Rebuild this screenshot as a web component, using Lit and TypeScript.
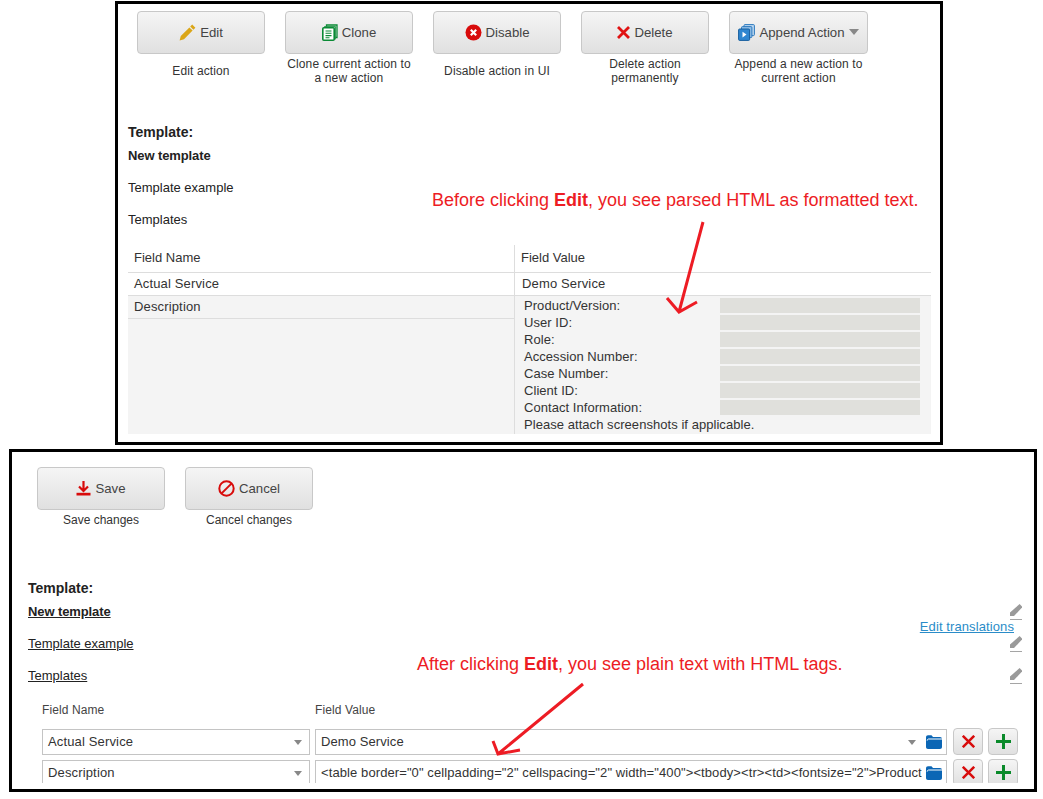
import { LitElement, html, css, svg } from "lit";
import { customElement } from "lit/decorators.js";

const icons: Record<string, any> = {
  edit: html`<svg width="17" height="17" viewBox="0 0 17 17"><path d="M13.2 .6l3.2 3.2-2 2-3.2-3.2zM10.4 3.4l3.2 3.2-8.6 8.6-4.4 1.2 1.2-4.4z" fill="#dba617"/></svg>`,
  clone: html`<svg width="16" height="17" viewBox="0 0 16 17"><path d="M4.5 2.5V1h10.5v12.5h-1.5" fill="none" stroke="#0a8a35" stroke-width="1.3"/><rect x="2.7" y="2.7" width="10.6" height="12.2" fill="none" stroke="#0a8a35" stroke-width="1"/><rect x=".8" y="3.8" width="11.4" height="12.4" rx="1" fill="#fff" stroke="#0a8a35" stroke-width="1.6"/><path d="M3.5 7h6M3.5 9.3h6M3.5 11.6h6M3.5 13.8h4" stroke="#0a8a35" stroke-width="1.1"/></svg>`,
  disable: html`<svg width="17" height="17" viewBox="0 0 17 17"><circle cx="8.5" cy="8.5" r="8" fill="#d80b0b"/><path d="M5.8 5.8l5.4 5.4M11.2 5.8l-5.4 5.4" stroke="#fff" stroke-width="2.2"/></svg>`,
  del: html`<svg width="13" height="13" viewBox="0 0 13 13"><path d="M1 1l11 11M12 1L1 12" stroke="#e01212" stroke-width="2.8"/></svg>`,
  append: html`<svg width="17" height="17" viewBox="0 0 17 17"><rect x="6" y=".6" width="10.4" height="11" rx="1" fill="#bcd7f0" stroke="#2c79bd"/><rect x="3.5" y="2.6" width="10.4" height="11" rx="1" fill="#8fbde6" stroke="#2c79bd"/><rect x=".6" y="5" width="11" height="11.4" rx="1" fill="#2f86d0" stroke="#175e9e"/><path d="M4.5 7.8l4 2.8-4 2.8z" fill="#fff"/></svg>`,
  save: html`<svg width="15" height="15" viewBox="0 0 15 15"><path d="M7.5 0v9M3 5.5l4.5 4.5L12 5.5" fill="none" stroke="#d80b0b" stroke-width="2.2"/><path d="M.5 11.8h14v2.7H.5z" fill="#d80b0b"/></svg>`,
  cancel: html`<svg width="17" height="17" viewBox="0 0 17 17"><circle cx="8.5" cy="8.5" r="7.2" fill="none" stroke="#d80b0b" stroke-width="2"/><path d="M3.6 13.4l9.8-9.8" stroke="#d80b0b" stroke-width="2"/></svg>`,
};

const pencil = html`<svg class="pencil" width="12" height="16" viewBox="0 0 12 16"><path d="M9.6 0L12 2.4v1.2L4 12H0v-3.6z" fill="#9a9a9a"/><path d="M0 15.5h12" stroke="#a5a5a5" stroke-width="1"/></svg>`;
const folder = html`<svg width="16" height="14" viewBox="0 0 16 14"><path d="M0 2.5C0 1 .8.3 2 .3h3.5L7 2h7c1.2 0 2 .7 2 2v8c0 1.2-.8 2-2 2H2c-1.2 0-2-.8-2-2z" fill="#0b66b5"/><path d="M1.2 5.6c0-1 .6-1.6 1.4-1.6H16" fill="none" stroke="#fff" stroke-width="1"/></svg>`;
const rowX = html`<svg width="13" height="13" viewBox="0 0 13 13"><path d="M.8 .8l11.4 11.4M12.2 .8L.8 12.2" stroke="#d80b0b" stroke-width="2.5"/></svg>`;
const rowPlus = html`<svg width="15" height="15" viewBox="0 0 15 15"><path d="M7.5 0v15M0 7.5h15" stroke="#0a8a2a" stroke-width="3"/></svg>`;
const overlayArrows = svg`
  <path d="M703 222L679 312M667 298L679 312L697 302" fill="none" stroke="#ed1c24" stroke-width="3"/>
  <path d="M583 684L498 754M493 741L498 754L520 750" fill="none" stroke="#ed1c24" stroke-width="3"/>`;

@customElement("app-root")
export class AppRoot extends LitElement {
  static styles = css`
    :host { display: block; position: relative; width: 1043px; height: 799px; background: #fff; overflow: hidden;
      font-family: "Liberation Sans", Arial, sans-serif; color: #333; font-size: 13px; }
    .page { display: flex; flex-direction: column; gap: 4px; padding-top: 1px; }
    .frame { border: 3px solid #000; box-sizing: border-box; background: #fff; }
    .top { margin-left: 115px; width: 828px; height: 444px; }
    .bottom { margin-left: 9px; width: 1028px; height: 343px; padding-bottom: 6px; }
    .clip { height: 100%; overflow: hidden; position: relative; }

    .actions { display: flex; gap: 20px; }
    .top .actions { padding: 7px 0 0 19px; }
    .bottom .actions { padding: 15px 0 0 25px; }
    .action { display: flex; flex-direction: column; width: 128px; }
    .action.wide { width: 139px; }
    .btn { height: 43px; box-sizing: border-box; border: 1px solid #c8c8c8; border-radius: 4px; padding-bottom: 1px;
      background: linear-gradient(#f5f5f5, #e0e0e0); display: flex; align-items: center; justify-content: center;
      gap: 4px; font-size: 13.2px; color: #444; }
    .btn .caret { width: 0; height: 0; border: 5px solid transparent; border-top: 6px solid #888; border-bottom: 0; }
    .hint { margin-top: 3px; font-size: 12px; line-height: 14px; text-align: center; color: #333; }
    .top .hint { min-height: 28px; display: flex; align-items: center; justify-content: center; letter-spacing: .12px; }

    .tpl-title { font-size: 14px; font-weight: bold; line-height: 14px; color: #222; margin-bottom: 1px; }
    .tpl-row { display: flex; justify-content: space-between; align-items: center; height: 32px; line-height: 32px; color: #222; }
    .tpl-row.strong { font-weight: bold; letter-spacing: -.1px; }
    .top .tpl { padding: 40px 0 0 10px; margin-bottom: 9px; }
    .bottom .tpl { position: relative; padding: 54px 12px 0 16px; margin-bottom: 11px; }
    .bottom .tpl-row span { text-decoration: underline; }
    .pencil { display: block; }
    .translations { position: absolute; right: 20px; top: 0; margin-top: 93px; color: #2a8cc8; text-decoration: underline; line-height: 14px; letter-spacing: .1px; }

    .grid { margin-left: 10px; width: 803px; display: grid; grid-template-columns: 386px 417px; line-height: 22px; }
    .cell { box-sizing: border-box; padding-left: 6px; letter-spacing: .15px; }
    .h { height: 28px; line-height: 25px; border-bottom: 1px solid #ddd; letter-spacing: 0; }
    .r { height: 23px; border-bottom: 1px solid #ddd; }
    .v { border-left: 1px solid #ddd; }
    .demo { padding-left: 7px; }
    .grey { background: #f4f4f4; height: 138px; }
    .namecell { padding: 0; }
    .name { padding-left: 6px; height: 23px; box-sizing: border-box; border-bottom: 1px solid #ddd; }
    .inner { display: grid; grid-template-columns: 196px 200px; grid-auto-rows: 15px; row-gap: 2px; padding: 2px 0 0 9px; line-height: 15px; letter-spacing: .05px; }
    .inner i { background: #e0e0dc; display: block; }
    .inner .full { grid-column: 1 / 3; }
    .valuecell { padding-left: 0; }
    .valuecell .inner { padding-left: 9px; }

    .fhead { display: flex; padding-left: 30px; font-size: 12px; line-height: 14px; letter-spacing: .1px; color: #444; margin-bottom: 11px; }
    .fhead span:first-child { width: 273px; }
    .frow { display: flex; align-items: flex-start; height: 27px; margin: 0 0 4px 16px; }
    .grip { width: 9px; height: 20px; margin: 4px 5px 0 0; flex: none;
      background-image: radial-gradient(#999 .5px, transparent .6px); background-size: 2px 2px; }
    .field { box-sizing: border-box; height: 26px; margin-top: 1px; border: 1px solid #c4c4c4; display: flex; align-items: center; flex: none; background: #fff; color: #333; white-space: nowrap; overflow: hidden; }
    .field > span:first-child { margin-bottom: 2px; }
    .select { width: 268px; padding: 0 5px; margin-right: 5px; letter-spacing: .15px; justify-content: space-between; }
    .input { width: 632px; padding: 0 4px 0 5px; margin-right: 6px; }
    .input .txt { flex: 1; overflow: hidden; letter-spacing: .095px; }
    .dn { width: 0; height: 0; border: 4.5px solid transparent; border-top: 5px solid #888; border-bottom: 0; flex: none; margin-right: 2px; }
    .input .dn { margin-right: 10px; }
    .sq { box-sizing: border-box; width: 30px; height: 27px; border: 1px solid #c8c8c8; border-radius: 4px; flex: none; margin-right: 5px;
      background: linear-gradient(#f5f5f5, #e0e0e0); display: flex; align-items: center; justify-content: center; }

    .overlay { position: absolute; left: 0; top: 0; pointer-events: none; }
    .note { position: absolute; color: #ed1c24; font-size: 18px; line-height: 20px; white-space: nowrap; }
    .n1 { left: 432px; top: 190px; }
    .n2 { left: 417px; top: 654px; }
  `;

  private action(icon: string, label: string, hint: string, wide = false) {
    return html`<div class="action ${wide ? "wide" : ""}">
      <div class="btn">${icons[icon]}<span>${label}</span>${wide ? html`<span class="caret"></span>` : ""}</div>
      <div class="hint"><span>${hint}</span></div>
    </div>`;
  }

  render() {
    const labels = ["Product/Version:", "User ID:", "Role:", "Accession Number:", "Case Number:", "Client ID:", "Contact Information:"];
    const code = `<table border="0" cellpadding="2" cellspacing="2" width="400"><tbody><tr><td><fontsize="2">Product`;
    return html`
      <div class="page">
        <section class="frame top">
          <div class="actions">
            ${this.action("edit", "Edit", "Edit action")}
            ${this.action("clone", "Clone", "Clone current action to a new action")}
            ${this.action("disable", "Disable", "Disable action in UI")}
            ${this.action("del", "Delete", "Delete action permanently")}
            ${this.action("append", "Append Action", "Append a new action to current action", true)}
          </div>
          <div class="tpl">
            <div class="tpl-title">Template:</div>
            <div class="tpl-row strong"><span>New template</span></div>
            <div class="tpl-row"><span>Template example</span></div>
            <div class="tpl-row"><span>Templates</span></div>
          </div>
          <div class="grid">
            <div class="cell h">Field Name</div>
            <div class="cell h v">Field Value</div>
            <div class="cell r">Actual Service</div>
            <div class="cell r v demo">Demo Service</div>
            <div class="cell grey namecell"><div class="name">Description</div></div>
            <div class="cell grey v valuecell">
              <div class="inner">
                ${labels.map((l) => html`<span>${l}</span><i></i>`)}
                <span class="full">Please attach screenshots if applicable.</span>
              </div>
            </div>
          </div>
        </section>
        <section class="frame bottom">
          <div class="clip">
            <div class="actions">
              ${this.action("save", "Save", "Save changes")}
              ${this.action("cancel", "Cancel", "Cancel changes")}
            </div>
            <div class="tpl">
              <div class="translations">Edit translations</div>
              <div class="tpl-title">Template:</div>
              <div class="tpl-row strong"><span>New template</span>${pencil}</div>
              <div class="tpl-row"><span>Template example</span>${pencil}</div>
              <div class="tpl-row"><span>Templates</span>${pencil}</div>
            </div>
            <div class="fhead"><span>Field Name</span><span>Field Value</span></div>
            <div class="frow">
              <div class="grip"></div>
              <div class="field select"><span>Actual Service</span><span class="dn"></span></div>
              <div class="field input"><span class="txt">Demo Service</span><span class="dn"></span>${folder}</div>
              <div class="sq">${rowX}</div><div class="sq">${rowPlus}</div>
            </div>
            <div class="frow">
              <div class="grip"></div>
              <div class="field select"><span>Description</span><span class="dn"></span></div>
              <div class="field input"><span class="txt">${code}</span>${folder}</div>
              <div class="sq">${rowX}</div><div class="sq">${rowPlus}</div>
            </div>
          </div>
        </section>
      </div>
      <svg class="overlay" width="1043" height="799">${overlayArrows}</svg>
      <div class="note n1">Before clicking <b>Edit</b>, you see parsed HTML as formatted text.</div>
      <div class="note n2">After clicking <b>Edit</b>, you see plain text with HTML tags.</div>
    `;
  }
}
